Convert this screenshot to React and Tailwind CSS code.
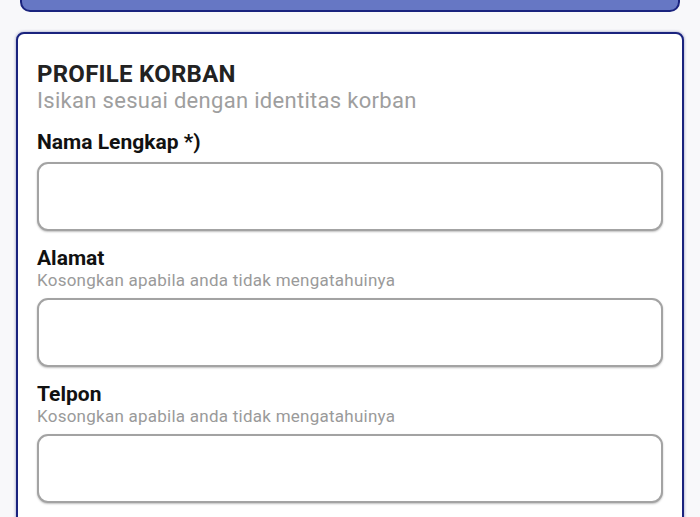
import React from "react";

const FIELDS = [
  { label: "Alamat", hint: "Kosongkan apabila anda tidak mengatahuinya" },
  { label: "Telpon", hint: "Kosongkan apabila anda tidak mengatahuinya" },
];

function Field({ label, hint }) {
  return (
    <div className="mt-[15px]">
      <div className="text-[21px] leading-[24px] font-bold text-[#111]">{label}</div>
      <div className="text-[17px] leading-[20px] tracking-[0.25px] text-[#9a9a9a]">{hint}</div>
      <input
        type="text"
        className="mt-2 block w-full h-[69px] rounded-[11px] border-2 border-[#a3a3a3] bg-white shadow-[0_1px_2px_rgba(0,0,0,0.25)] focus:outline-none"
      />
    </div>
  );
}

export default function App() {
  return (
    <div className="min-h-[517px] bg-[#f8f8fa] px-4 overflow-hidden" style={{ fontFamily: "Roboto, 'Noto Sans', sans-serif" }}>
      {/* top card, scrolled off */}
      <div className="mx-1 -mt-[40px] h-[52px] rounded-[10px] border-2 border-[#1a237e] bg-[#6677c4]" />

      <div className="mt-[20px] rounded-[8px] border-2 border-[#1a237e] bg-white shadow-[0_0_3px_rgba(26,35,126,0.5)] px-[19px] pt-[26px] pb-6">
        <div className="text-[24px] leading-[28px] font-bold tracking-[0.25px] text-[#222]">PROFILE KORBAN</div>
        <div className="text-[22px] leading-[26px] tracking-[0.3px] text-[#9e9e9e]">Isikan sesuai dengan identitas korban</div>

        <div className="mt-4">
          <div className="text-[21px] leading-[24px] font-bold text-[#111]">Nama Lengkap *)</div>
          <input
            type="text"
            className="mt-2 block w-full h-[69px] rounded-[11px] border-2 border-[#a3a3a3] bg-white shadow-[0_1px_2px_rgba(0,0,0,0.25)] focus:outline-none"
          />
        </div>

        {FIELDS.map((f) => (
          <Field key={f.label} {...f} />
        ))}
      </div>
    </div>
  );
}
